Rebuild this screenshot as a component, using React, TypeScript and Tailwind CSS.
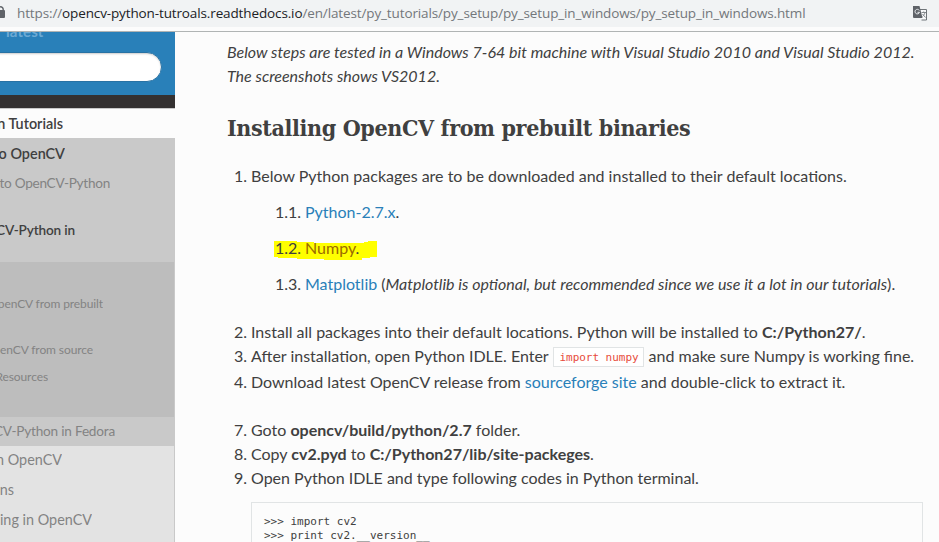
import React from "react";

type SideRowProps = { text: string; row: string; end: string };

// Sidebar entries end at a fixed edge; their beginning is scrolled out of view.
function SideRow({ text, row, end }: SideRowProps) {
  return (
    <div className={`flex justify-end overflow-hidden whitespace-nowrap ${row} ${end}`}>
      <span>{text}</span>
    </div>
  );
}

function Item({ n, children, h = "h-6" }: { n: string; children: React.ReactNode; h?: string }) {
  return (
    <li className={`flex whitespace-nowrap ${h}`}>
      <span className="w-5 shrink-0 text-right">{n}</span>
      <span className="pl-1">{children}</span>
    </li>
  );
}

function SubItem({ n, children, marked = false }: { n: string; children: React.ReactNode; marked?: boolean }) {
  return (
    <li className="relative flex h-9 whitespace-nowrap pl-12">
      {marked && (
        <svg className="absolute left-[47px] top-[5px] h-[20px] w-[104px]" viewBox="0 0 104 20">
          <path d="M0 0h23v1h17v1h50v-1h4v-1h9v16h-7v1h-8v2H50v-1H23v-1H4v-1H0z" fill="#ffff00" />
        </svg>
      )}
      <span className="relative w-[30px] shrink-0">{n}</span>
      <span className="relative">{children}</span>
    </li>
  );
}

function AddressBar() {
  return (
    <header className="flex h-[27px] shrink-0 items-center bg-[#f1f3f4] font-['Open_Sans',sans-serif] text-[13.5px] text-[#73777b]">
      <svg className="h-[27px] w-[17px] shrink-0" viewBox="0 0 17 27">
        <path d="M-2.2 11V9.500a2.700 2.700 0 0 1 5.400 0V11" fill="none" stroke="#5f6368" strokeWidth="1.4" />
        <rect x="-5" y="10" width="10" height="8" rx="1" fill="#5f6368" />
      </svg>
      <div className="flex-1 whitespace-nowrap tracking-[-0.125px]">
        https://<span className="text-[#202124]">opencv-python-tutroals.readthedocs.io</span>
        /en/latest/py_tutorials/py_setup/py_setup_in_windows/py_setup_in_windows.html
      </div>
      <svg className="mr-[11px] h-[15px] w-[15px] shrink-0" viewBox="0 0 15 15">
        <path d="M6 3.500h7.500v10.500H8.500" fill="#f8f9fa" stroke="#6f7478" />
        <path d="M0 0h6.500l3 12H1a1 1 0 0 1-1-1z" fill="#5f6368" />
        <path d="M6.300 4.500A2.300 2.300 0 1 0 6.500 6.300H4.500" fill="none" stroke="#e8eaed" />
        <path d="M8.500 6.500H13M10.700 5.500v1M12 6.500c-.5 2-1.500 3-2.500 4M9.500 8l3 3.500" fill="none" stroke="#858a8e" />
      </svg>
    </header>
  );
}

function Sidebar() {
  return (
    <nav className="flex w-[175px] shrink-0 flex-col overflow-hidden text-[14.4px] text-[#838383]">
      <div className="h-[63px] shrink-0 overflow-hidden bg-[#2980b9]">
        <div className="h-[20px] overflow-hidden pl-[6px] text-[15px] font-bold leading-[18px] text-[#6daad4]">
          <div className="-mt-[10px] tracking-[0.1px]">latest</div>
        </div>
        <div className="-ml-8 h-[30px] w-[194px] rounded-full border border-[#2872a4] bg-white shadow-[inset_0_1px_2px_#ccc]" />
      </div>
      <div className="h-[13px] shrink-0 bg-[#343131]" />
      <div className="h-[30px] shrink-0 border-t border-[#c9c9c9] bg-[#fcfcfc] font-semibold text-[#404040]">
        <SideRow text="Python Tutorials" row="h-[29px] leading-[30px]" end="w-[63px]" />
      </div>
      <div className="h-[124px] shrink-0 bg-[#c9c9c9]">
        <SideRow text="to OpenCV" row="h-[31px] font-semibold leading-[31px] text-[#404040]" end="w-[65px]" />
        <SideRow text="to OpenCV-Python" row="h-[29px] text-[13.6px] leading-[29px] tracking-[-0.27px]" end="w-[110px]" />
        <SideRow text="OpenCV-Python in" row="mt-[17px] h-[30px] text-[13.6px] font-semibold leading-[30px] tracking-[-0.15px] text-[#404040]" end="w-[75px]" />
      </div>
      <div className="h-[155px] shrink-0 border-r border-[#c9c9c9] bg-[#bdbdbd] pt-[28px] text-[12px] tracking-[-0.1px]">
        <SideRow text="OpenCV from prebuilt" row="h-[27px] leading-[27px]" end="w-[103px]" />
        <SideRow text="OpenCV from source" row="mt-[19px] h-[27px] leading-[27px]" end="w-[93px]" />
        <SideRow text="Resources" row="h-[27px] leading-[27px]" end="w-[48px]" />
      </div>
      <div className="h-[29px] shrink-0 bg-[#c9c9c9] text-[13.6px] tracking-[-0.2px]">
        <SideRow text="OpenCV-Python in Fedora" row="h-[29px] leading-[29px]" end="w-[115px]" />
      </div>
      <div className="flex-1 border-r border-[#c9c9c9] bg-[#e3e3e3]">
        <SideRow text="in OpenCV" row="h-[29px] leading-[27px]" end="w-[62px]" />
        <SideRow text="Operations" row="h-[30px] leading-[30px]" end="w-[14px]" />
        <SideRow text="Processing in OpenCV" row="h-[30px] leading-[30px]" end="w-[92px]" />
      </div>
    </nav>
  );
}

export default function App() {
  return (
    <div className="flex h-[542px] w-[939px] flex-col overflow-hidden bg-[#fcfcfc] font-['Lato',sans-serif]">
      <AddressBar />
      <div className="h-[5px] shrink-0 border-b border-[#b0b4b4] bg-[#fcfcfc]" />
      <div className="flex min-h-0 flex-1">
        <Sidebar />
        <main className="min-w-0 flex-1 overflow-hidden pl-[52px] text-[16px] leading-6 text-[#404040]">
          <p className="mt-2 whitespace-nowrap italic">
            <span className="tracking-[0.014px]">Below steps are tested in a Windows 7-64 bit machine with Visual Studio 2010 and Visual Studio 2012.</span>
            <br />
            The screenshots shows VS2012.
          </p>
          <h2 className="mt-[24px] h-[32px] whitespace-nowrap font-['DejaVu_Serif_Condensed','DejaVu_Serif',serif] text-[23px] font-bold leading-[32px] tracking-[-0.36px]">
            Installing OpenCV from prebuilt binaries
          </h2>
          <ol className="mt-[20px]">
            <Item n="1." h="h-9">Below Python packages are to be downloaded and installed to their default locations.</Item>
            <ol className="mb-3">
              <SubItem n="1.1."><span className="text-[#2980b9]">Python-2.7.x</span>.</SubItem>
              <SubItem n="1.2." marked><span className="text-[#9b6b00]">Numpy</span>.</SubItem>
              <SubItem n="1.3.">
                <span className="text-[#2980b9]">Matplotlib</span> (<i>Matplotlib is optional, but recommended since we use it a lot in our tutorials</i>).
              </SubItem>
            </ol>
            <Item n="2.">Install all packages into their default locations. Python will be installed to <b>C:/Python27/</b>.</Item>
            <Item n="3." h="h-[26px]">
              After installation, open Python IDLE. Enter{" "}
              <code className="ml-px inline-block h-5 w-[91px] border border-[#e1e4e5] bg-white pl-[5px] align-[1px] font-['DejaVu_Sans_Mono',monospace] text-[11px] leading-[19px] tracking-[-0.03px] text-[#e74c3c]">
                import numpy
              </code>{" "}
              and make sure Numpy is working fine.
            </Item>
            <Item n="4." h="h-12">
              Download latest OpenCV release from <span className="text-[#2980b9]">sourceforge site</span> and double-click to extract it.
            </Item>
            <Item n="7.">Goto <b>opencv/build/python/2.7</b> folder.</Item>
            <Item n="8.">Copy <b>cv2.pyd</b> to <b>C:/Python27/lib/site-packeges</b>.</Item>
            <Item n="9.">Open Python IDLE and type following codes in Python terminal.</Item>
          </ol>
          <pre className="ml-6 mt-3 h-[60px] w-[672px] border border-[#e1e4e5] px-3 py-[12px] font-['DejaVu_Sans_Mono',monospace] text-[11px] leading-[14px]">
            {">>> import cv2\n>>> print cv2.__version__"}
          </pre>
        </main>
      </div>
    </div>
  );
}
